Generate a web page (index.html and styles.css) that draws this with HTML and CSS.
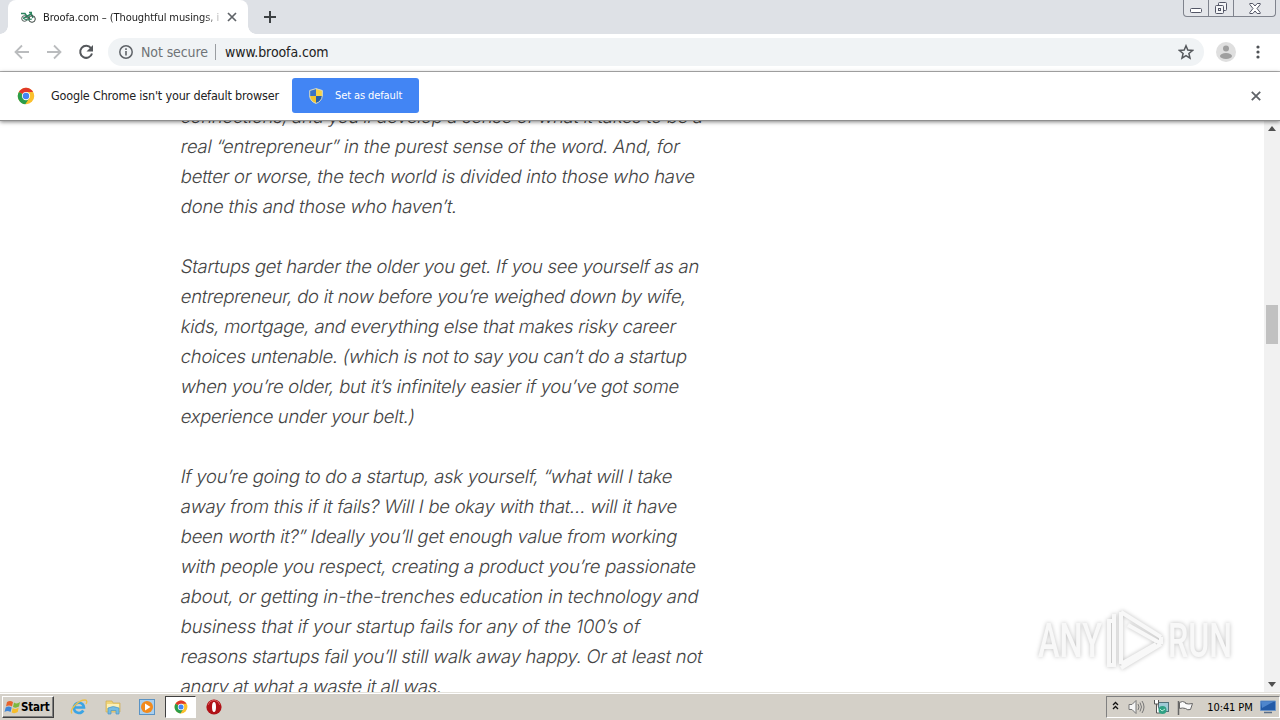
FILE: index.html
```
<!DOCTYPE html>
<html lang="en">
<head>
    <meta charset="UTF-8">
    <meta name="viewport" content="width=device-width, initial-scale=1.0">
    <title>Broofa.com</title>
    <link rel="stylesheet" href="styles.css">
</head>
<body>

<svg class="defs" width="0" height="0">
    <symbol id="chrome" viewBox="0 0 24 24">
        <circle cx="12" cy="12" r="11" fill="#fbc02d"/>
        <path d="M12 12 2.500 6.500A11 11 0 0 1 21.500 6.500H12z" fill="#e0382b"/>
        <path d="M2.500 6.500A11 11 0 0 0 11 23l5.500-8.500L12 12z" fill="#2a9d4a"/>
        <circle cx="12" cy="12" r="5.500" fill="#fff"/>
        <circle cx="12" cy="12" r="4.300" fill="#4285f4"/>
    </symbol>
</svg>

<header class="tabstrip">
    <div class="tab">
        <svg class="favicon" width="16" height="14" viewBox="0 0 16 14" fill="none">
            <path d="M1 3.500h4l2 3 4-2.500M5 4l5 5M7 6.500l-4 2M11 3l2 5M9 2.500h3" stroke="#2c8560" stroke-width="1.500"/>
            <circle cx="4.500" cy="8.500" r="2.800" stroke="#4b5a55"/>
            <circle cx="12" cy="9" r="3.300" stroke="#39443f"/>
            <path d="m4 9 4 1 4-1" stroke="#2c8560"/>
        </svg>
        <span class="tab-title">Broofa.com – (Thoughtful musings, if</span>
        <svg width="10" height="10" viewBox="0 0 10 10" stroke="#5f6368" stroke-width="1.700"><path d="m1 1 8 8M9 1 1 9"/></svg>
    </div>
    <svg class="new-tab" width="12" height="12" viewBox="0 0 12 12" stroke="#3c4043" stroke-width="2"><path d="M6 0v12M0 6h12"/></svg>
    <div class="window-buttons">
        <span class="wb wb-min"><svg width="12" height="6" viewBox="0 0 12 6"><rect x=".5" y=".5" width="11" height="4" rx="1" fill="#fff" stroke="#535666"/></svg></span>
        <span class="wb wb-max"><svg width="14" height="14" viewBox="0 0 14 14" fill="#f4f5f7" stroke="#535666"><rect x="4.500" y="1.500" width="8" height="8" rx="1"/><rect x="1.500" y="4.500" width="8" height="8" rx="1"/><rect x="4.500" y="7.500" width="2" height="2"/></svg></span>
        <span class="wb wb-close"><svg width="12" height="11" viewBox="0 0 12 11" fill="#fff" stroke="#535666"><path d="M.8.5h3L6 3 8.200.5h3v1L8 5.500l3.200 4v1h-3L6 8l-2.200 2.500h-3v-1L4 5.500.8 1.500z"/></svg></span>
    </div>
</header>

<nav class="toolbar">
    <svg class="arrow" width="16" height="16" viewBox="0 0 16 16" fill="none" stroke="#babcbe" stroke-width="1.800"><path d="M15 8H2M8 1.500 1.500 8 8 14.500"/></svg>
    <svg class="arrow" width="16" height="16" viewBox="0 0 16 16" fill="none" stroke="#babcbe" stroke-width="1.800"><path d="M1 8h13M8 1.500 14.500 8 8 14.500"/></svg>
    <svg class="reload" width="16" height="16" viewBox="0 0 16 16"><path d="M13 4.200A6 6 0 1 0 14 9.500" fill="none" stroke="#55585c" stroke-width="2"/><path d="M15 1v6.500H8.500z" fill="#55585c"/></svg>
    <div class="omnibox">
        <svg width="14" height="14" viewBox="0 0 14 14"><circle cx="7" cy="7" r="6.200" fill="none" stroke="#5f6368" stroke-width="1.500"/><path d="M6.200 6h1.600v4.500H6.200zM6.200 3.300h1.600v1.600H6.200z" fill="#5f6368"/></svg>
        <span class="not-secure">Not secure</span>
        <span class="url">www.broofa.com</span>
        <svg class="star" width="16" height="16" viewBox="0 0 16 16" fill="none" stroke="#55585c" stroke-width="1.500"><path d="m8 1.800 1.800 4.300 4.700.4-3.600 3 1.100 4.600L8 11.700l-4 2.400 1.100-4.600-3.600-3 4.700-.4z"/></svg>
    </div>
    <svg class="avatar" width="20" height="20" viewBox="0 0 20 20"><circle cx="10" cy="10" r="10" fill="#dfdfdf"/><circle cx="10" cy="6.500" r="3" fill="#9f9f9f"/><ellipse cx="10" cy="14" rx="6" ry="3" fill="#9f9f9f"/></svg>
    <svg class="menu" width="4" height="14" viewBox="0 0 4 14" fill="#4f5256"><circle cx="2" cy="2" r="1.600"/><circle cx="2" cy="7" r="1.600"/><circle cx="2" cy="12" r="1.600"/></svg>
</nav>

<div class="infobar">
    <svg width="18" height="18"><use href="#chrome"/></svg>
    <span class="infobar-text">Google Chrome isn't your default browser</span>
    <button class="default-btn">
        <svg width="14" height="16" viewBox="0 0 14 16">
            <path d="M7 .5 13.500 2.500V8H7z" fill="#f7d245"/>
            <path d="M7 .5.5 2.500V8H7z" fill="#3b73c4"/>
            <path d="M.5 8C1 12 4 14.500 7 15.500V8z" fill="#f2c52f"/>
            <path d="M13.500 8C13 12 10 14.500 7 15.500V8z" fill="#285fa9"/>
            <path d="M7 .6 13.300 2.500V8C13 12 10 14.500 7 15.400 4 14.500 1 12 .7 8V2.500z" fill="none" stroke="#d8dcc8"/>
        </svg>
        <span>Set as default</span>
    </button>
    <svg class="infobar-close" width="10" height="10" viewBox="0 0 10 10" stroke="#5f6368" stroke-width="1.800"><path d="m.8.8 8.400 8.400M9.200.8.8 9.200"/></svg>
</div>

<main class="viewport">
    <article class="post">
        <p>
            <span class="l1">connections, and you’ll develop a sense of what it takes to be a</span>
            <span class="l2">real “entrepreneur” in the purest sense of the word. And, for</span>
            <span class="l3">better or worse, the tech world is divided into those who have</span>
            <span class="l4">done this and those who haven’t.</span>
        </p>
        <p>
            <span class="l5">Startups get harder the older you get. If you see yourself as an</span>
            <span class="l6">entrepreneur, do it now before you’re weighed down by wife,</span>
            <span class="l7">kids, mortgage, and everything else that makes risky career</span>
            <span class="l8">choices untenable. (which is not to say you can’t do a startup</span>
            <span class="l9">when you’re older, but it’s infinitely easier if you’ve got some</span>
            <span class="l10">experience under your belt.)</span>
        </p>
        <p>
            <span class="l11">If you’re going to do a startup, ask yourself, “what will I take</span>
            <span class="l12">away from this if it fails? Will I be okay with that… will it have</span>
            <span class="l13">been worth it?” Ideally you’ll get enough value from working</span>
            <span class="l14">with people you respect, creating a product you’re passionate</span>
            <span class="l15">about, or getting in-the-trenches education in technology and</span>
            <span class="l16">business that if your startup fails for any of the 100’s of</span>
            <span class="l17">reasons startups fail you’ll still walk away happy. Or at least not</span>
            <span class="l18">angry at what a waste it all was.</span>
        </p>
    </article>
    <div class="scrollbar">
        <svg width="8" height="5" viewBox="0 0 8 5"><path d="m0 5 4-5 4 5z" fill="#505050"/></svg>
        <div class="thumb"></div>
        <svg width="8" height="5" viewBox="0 0 8 5"><path d="m0 0 4 5 4-5z" fill="#505050"/></svg>
    </div>
    <svg class="watermark" width="210" height="76" viewBox="0 0 210 76">
        <g class="mark-text">
            <text x="8" y="55" textLength="64" lengthAdjust="spacingAndGlyphs">ANY</text>
            <text x="138" y="55" textLength="64" lengthAdjust="spacingAndGlyphs">RUN</text>
        </g>
        <g class="mark-play">
            <path d="M86 19h-7v44h7M84 12v50"/>
            <path d="M91 10v52M91 10l40 25M98 23l32 18M91 66l40-24M131 35v7M91 62l35-20"/>
        </g>
    </svg>
</main>

<footer class="taskbar">
    <button class="start">
        <svg width="17" height="16" viewBox="0 0 17 16">
            <path d="M3 3q3-2 6 0L8 7.500q-3-2-6 0z" fill="#e8632c"/>
            <path d="M10 3.500q3 2 6-.5l-1 4.500q-3 2-6 .5z" fill="#7cb83f"/>
            <path d="M1.700 8.500q3-2 6 0L6.500 13q-3-2-6 0z" fill="#3f86d8"/>
            <path d="M8.700 9q3 2 6-.5l-1 4.500q-3 2-6 .5z" fill="#f6bd2b"/>
        </svg>
        <span>Start</span>
    </button>
    <svg class="task ie" width="18" height="18" viewBox="0 0 18 18" fill="none">
        <path d="M4.500 9.500h9.500a5 5 0 0 0-10 .5c0 5.500 7 6.500 9.300 2.500" stroke="#3ba4e4" stroke-width="2.600"/>
        <path d="M2 15.500C-1 12 8 2 15 2c2.500 0 2 2.500 1 4" stroke="#ecc04a" stroke-width="1.300"/>
    </svg>
    <svg class="task" width="18" height="18" viewBox="0 0 18 18">
        <path d="M2 3h6l1 2h7v9H2z" fill="#f0d579" stroke="#cfae50" stroke-width=".7"/>
        <path d="M3 6h12v4H3z" fill="#fbf0b8"/>
        <path d="M4 16v-6q5-3 11 0v6h-3v-3.500H7V16z" fill="#75bce3" stroke="#4b96c4" stroke-width=".7"/>
    </svg>
    <svg class="task" width="18" height="18" viewBox="0 0 18 18">
        <rect x="1.500" y="1.500" width="15" height="15" fill="#a9cfee" stroke="#5a93c4"/>
        <circle cx="9" cy="9" r="6" fill="#f28a1c"/><path d="m7 5.500 5.500 3.500L7 12.500z" fill="#fff"/>
    </svg>
    <div class="active-task"><svg width="14" height="14"><use href="#chrome"/></svg></div>
    <svg class="opera" width="16" height="16" viewBox="0 0 16 16"><circle cx="8" cy="8" r="7.600" fill="#b01217"/><ellipse cx="8" cy="8" rx="2" ry="5" fill="#fff"/><path d="M2 6q1-4 6-5 5 1 6 5" fill="none" stroke="#d9585a"/></svg>
    <div class="tray">
        <svg class="chevrons" width="7" height="9" viewBox="0 0 7 9" fill="none" stroke="#111" stroke-width="1.300"><path d="m1 4 2.500-2.500L6 4M1 8l2.500-2.500L6 8"/></svg>
        <svg width="17" height="14" viewBox="0 0 17 14" fill="none" stroke="#777"><path d="M1 4.500h3l4-4v13l-4-4H1z" fill="#f6f6f6"/><path d="M10 4q2 3 0 6M12 2.500q3 4.500 0 9M14 1q4 6 0 12"/></svg>
        <svg width="17" height="16" viewBox="0 0 17 16"><rect x="5.500" y="3.500" width="10" height="9" fill="#9fcbd6" stroke="#53727a"/><path d="M1.500 1v4h4V1M3.500 5v9h4" fill="#fff" stroke="#555"/><circle cx="9.500" cy="11" r="4" fill="#30a184"/><path d="m7 10 2 2 3-2" stroke="#b9ead6" fill="none"/></svg>
        <svg width="17" height="15" viewBox="0 0 17 15"><path d="M2.500 2.500q3-2 6 0v1q3 1 7 0l-2 6q-3 1-5-1-3-1-6 0z" fill="#fafafa" stroke="#666"/><path d="M1.500 1v14" stroke="#666" stroke-width="1.500"/></svg>
        <span class="clock">10:41 PM</span>
        <svg width="16" height="14" viewBox="0 0 16 14"><path d="M.5 1h15v9.500H.5z" fill="#245ba8" stroke="#6d96c9"/><path d="M1 1.500h13L2 8z" fill="#4f86cd"/><path d="M4 12.500h8" stroke="#5b6f88" stroke-width="1.500"/></svg>
    </div>
</footer>

</body>
</html>
```
FILE: styles.css
```
* {
    box-sizing: border-box;
}
body {
    margin: 0;
    width: 1280px;
    height: 720px;
    overflow: hidden;
    display: flex;
    flex-direction: column;
    background: #fff;
    font-family: "DejaVu Sans Condensed", "DejaVu Sans", sans-serif;
    color: #222;
}
svg {
    display: block;
    flex: none;
}
span {
    white-space: nowrap;
}
.defs {
    position: absolute;
}
button {
    font-family: inherit;
    border: none;
    margin: 0;
}

/* tabs */
.tabstrip {
    height: 34px;
    flex: none;
    display: flex;
    align-items: flex-start;
    padding-left: 8px;
    background: #dee1e6;
}
.tab {
    position: relative;
    width: 240px;
    height: 34px;
    padding: 0 11px 0 12px;
    display: flex;
    align-items: center;
    background: #fff;
    border-radius: 8px 8px 0 0;
}
.tab::before,
.tab::after {
    content: "";
    position: absolute;
    bottom: 0;
    width: 8px;
    height: 8px;
}
.tab::before {
    left: -8px;
    background: radial-gradient(circle at 0 0, transparent 7.5px, #fff 8px);
}
.tab::after {
    right: -8px;
    background: radial-gradient(circle at 100% 0, transparent 7.5px, #fff 8px);
}
.tab-title {
    width: 176px;
    margin: 0 8px 0 7px;
    overflow: hidden;
    font-size: 11px;
    letter-spacing: -0.08px;
    -webkit-mask-image: linear-gradient(90deg, #000 160px, transparent 182px);
}
.new-tab {
    margin: 11px 0 0 16px;
}
.window-buttons {
    display: flex;
    margin-left: auto;
    margin-right: 4px;
    height: 17px;
    border: 1px solid #7f838d;
    border-top: none;
    border-radius: 0 0 4px 4px;
    background: #e4e6ea;
}
.wb {
    display: flex;
    align-items: center;
    justify-content: center;
}
.wb-min {
    width: 24px;
    padding-top: 5px;
}
.wb-max {
    width: 26px;
    border-left: 1px solid #7f838d;
    border-right: 1px solid #7f838d;
}
.wb-close {
    width: 41px;
}

/* address bar */
.toolbar {
    height: 38px;
    flex: none;
    display: flex;
    align-items: center;
    padding: 0 20px 1px 14px;
    border-bottom: 1px solid #b4b4b4;
}
.arrow {
    margin-right: 16px;
}
.omnibox {
    width: 1096px;
    height: 28px;
    margin-left: 14px;
    padding: 0 10px 0 11px;
    display: flex;
    align-items: center;
    border-radius: 14px;
    background: #f0f3f5;
    font-size: 14px;
    letter-spacing: -0.1px;
}
.not-secure {
    width: 75px;
    margin-left: 8px;
    padding-right: 7px;
    border-right: 1px solid #9a9da1;
    line-height: 16px;
    color: #6f7377;
}
.url {
    margin-left: 9px;
}
.star {
    margin-left: auto;
}
.avatar {
    margin-left: 12px;
}
.menu {
    margin-left: auto;
}

/* default browser prompt */
.infobar {
    height: 49px;
    flex: none;
    display: flex;
    align-items: center;
    padding: 0 19px 1px 17px;
    border-bottom: 1px solid #8e8e8e;
    box-shadow: 0 1px 4px rgba(0,0,0,0.5);
    background: #fff;
    z-index: 1;
}
.infobar-text {
    width: 241px;
    margin-left: 16px;
    font-size: 12.5px;
    letter-spacing: -0.18px;
}
.default-btn {
    width: 127px;
    height: 35px;
    padding: 0 0 0 17px;
    display: flex;
    align-items: center;
    gap: 12px;
    border-radius: 3px;
    background: #4285f4;
    color: #fff;
    font-size: 11px;
    letter-spacing: -0.1px;
}
.infobar-close {
    margin-left: auto;
}

/* page */
.viewport {
    position: relative;
    height: 571px;
    display: flex;
    justify-content: space-between;
    overflow: hidden;
}
.post {
    margin: -20px 0 0 179.5px;
    font-family: Inter, sans-serif;
    font-size: 18.5px;
    font-weight: 300;
    line-height: 30px;
    letter-spacing: -0.31px;
    color: #444;
}
.post p {
    margin: 0 0 30px;
}
/* slanted roman, keeps the two-storey a */
.post span {
    display: block;
    transform: skewX(-11deg);
    transform-origin: 0 21px;
}
.l1 {
    letter-spacing: -0.33px;
}
.l2, .l3, .l4, .l14 {
    letter-spacing: -0.25px;
}
.l5, .l7, .l11 {
    letter-spacing: -0.29px;
}
.l12, .l17 {
    letter-spacing: -0.27px;
}
.l10, .l18 {
    letter-spacing: -0.36px;
}
.l15 {
    letter-spacing: -0.19px;
}
.l16 {
    letter-spacing: -0.16px;
}
.scrollbar {
    width: 16px;
    padding: 5px 0;
    display: flex;
    flex-direction: column;
    align-items: center;
    background: #f1f1f1;
}
.thumb {
    width: 12px;
    height: 39px;
    margin: 174px 0 auto;
    background: #c1c1c1;
}
.watermark {
    position: absolute;
    left: 1030px;
    top: 481px;
    filter: drop-shadow(0 0 2px rgba(0,0,0,0.25));
}
.mark-text {
    font-family: Roboto, sans-serif;
    font-size: 49px;
    font-weight: 500;
    fill: #f8f8f8;
}
.mark-play {
    fill: none;
    stroke: #f8f8f8;
    stroke-width: 4px;
}

/* taskbar */
.taskbar {
    height: 28px;
    flex: none;
    display: flex;
    align-items: center;
    padding: 1px 0 0 2px;
    background: #d4d0c8;
    border-top: 1px solid #e4e2dc;
    box-shadow: inset 0 1px #fff;
}
.start {
    width: 52px;
    height: 22px;
    padding: 0 0 0 1px;
    display: flex;
    align-items: center;
    background: #d4d0c8;
    border: 1px solid;
    border-color: #fff #404040 #404040 #fff;
    box-shadow: inset -1px -1px #808080;
    font-size: 11.5px;
    font-weight: bold;
    letter-spacing: -0.2px;
    color: #000;
}
.task {
    margin-right: 16px;
}
.ie {
    margin-left: 16px;
}
.active-task {
    width: 31px;
    height: 22px;
    margin-left: -7px;
    display: flex;
    align-items: center;
    justify-content: center;
    border: 1px solid;
    border-color: #404040 #fff #fff #404040;
    background: #fff;
}
.opera {
    margin-left: 10px;
}
.tray {
    width: 174px;
    height: 22px;
    margin-left: auto;
    padding: 0 3px 0 5px;
    display: flex;
    align-items: center;
    justify-content: space-between;
    border: 1px solid;
    border-color: #808080 #fff #fff #808080;
}
.chevrons {
    margin: 0 2px 3px 0;
}
.clock {
    margin-left: 6px;
    font-size: 11px;
    letter-spacing: -0.1px;
    color: #000;
}
```
